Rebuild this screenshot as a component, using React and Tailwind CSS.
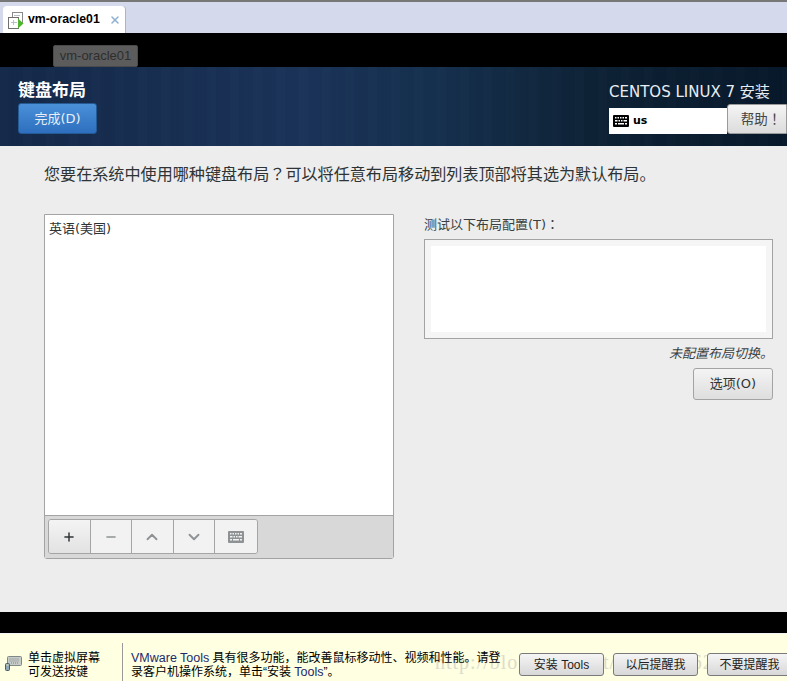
import { ChevronUp, ChevronDown, Minus, Plus, X } from "lucide-react";

const cjk = "font-['DejaVu_Sans','Noto_Sans_CJK_JP',sans-serif]";
const xpFont = "font-['Liberation_Sans','Noto_Sans_CJK_SC',sans-serif]";

function KeyboardIcon({ className }) {
  return (
    <svg viewBox="0 0 16 12" className={className} fill="currentColor">
      <path
        fillRule="evenodd"
        d="M1 0h14a1 1 0 0 1 1 1v10a1 1 0 0 1-1 1H1a1 1 0 0 1-1-1V1a1 1 0 0 1 1-1zM2 2v1.500h1.500V2zm2.500 0v1.500H6V2zM7 2v1.500h1.500V2zm2.500 0v1.500H11V2zM12 2v1.500h2V2zM2 5v1.500h2.500V5zm3.500 0v1.500H7V5zM8 5v1.500h1.500V5zm2.500 0v1.500H14V5zM2 8v1.500h2V8zm3 0v1.500h6V8zm7 0v1.500h2V8z"
      />
    </svg>
  );
}

function VmIcon() {
  return (
    <svg viewBox="0 0 18 18" className="h-[18px] w-[18px] shrink-0">
      <rect x="4.500" y="1.500" width="10" height="11" fill="none" stroke="#8a8a8a" />
      <rect x="0.500" y="6.500" width="10" height="11" fill="#fff" stroke="#707070" />
      <path d="M3 11.500h6M5.500 9v5M6 4.500h6" stroke="#b5c0c8" fill="none" />
      <path d="M10 7.500l5.500 5-5.500 5z" fill="#4fb52f" />
    </svg>
  );
}

function ToolButton({ children, active }) {
  return (
    <div
      className={`flex h-[33px] w-[41.600px] items-center justify-center border-r border-[#a5a5a5] last:border-r-0 ${
        active ? "bg-gradient-to-b from-[#f4f4f4] to-[#e2e2e2] text-[#2e3436]" : "bg-[#f2f2f2] text-[#8f9294]"
      }`}
    >
      {children}
    </div>
  );
}

function XpButton({ children, className }) {
  return (
    <div
      className={`flex h-[23px] items-center justify-center rounded-[3px] border border-[#7a7a7a] bg-gradient-to-b from-[#f5f5f5] to-[#d8d8d8] text-[12px] text-[#222] ${className}`}
    >
      {children}
    </div>
  );
}

export default function App() {
  return (
    <div className={`relative flex h-[681px] w-[787px] flex-col overflow-hidden ${cjk}`}>
      {/* vmware tab strip */}
      <div className="h-[33px] shrink-0 border-t-2 border-[#777] bg-[#d4daec] pl-[3px] pt-1">
        <div className={`flex h-[27px] w-[123px] items-center rounded-t-[4px] border-r border-[#a9b4cc] bg-white pl-[5px] ${xpFont}`}>
          <VmIcon />
          <span className="ml-[2px] text-[12.300px] font-bold text-black">vm-oracle01</span>
          <X size={12} strokeWidth={3} className="ml-[9px] text-[#8fb0d0]" />
        </div>
      </div>

      {/* black strip with tooltip */}
      <div className="h-[34px] shrink-0 bg-black pl-[53px] pt-3">
        <div className={`flex h-[22px] w-[85px] items-center justify-center rounded-[2px] border border-[#4a4a4a] bg-[#5c5c5c] text-[13px] text-[#2e2e2e] ${xpFont}`}>
          vm-oracle01
        </div>
      </div>

      {/* anaconda header */}
      <div className="flex h-[79px] shrink-0 justify-between bg-[repeating-linear-gradient(90deg,rgba(255,255,255,0.006)_0px,rgba(255,255,255,0.006)_9px,rgba(0,0,0,0.012)_9px,rgba(0,0,0,0.012)_23px),linear-gradient(90deg,#14294a_0%,#1a3358_38%,#15304f_55%,#0e2236_75%,#07182a_100%)]">
        <div className="pl-[18px] pt-3">
          <div className="text-[17px] font-bold leading-[22px] text-white">键盘布局</div>
          <div className="mt-[2px] flex h-[31px] w-[79px] items-center justify-center rounded-[3px] border border-[#255a94] bg-gradient-to-b from-[#4a90d9] to-[#2d6fbe] text-[13px] text-[#e8eef5]">
            完成(D)
          </div>
        </div>
        <div className="flex w-[178px] flex-col items-start pt-[15px]">
          <div className="whitespace-nowrap text-[15px] leading-5 text-[#e8edf2]">CENTOS LINUX 7 安装</div>
          <div className="mt-[6px] flex items-start">
            <div className="flex h-[26px] w-[118px] items-center bg-white pl-[4px]">
              <KeyboardIcon className="h-3 w-4 text-black" />
              <span className="ml-[4px] text-[11px] font-bold text-black">us</span>
            </div>
            <div className="-mt-[4px] flex h-[30px] w-[60px] items-center justify-center rounded-l-[3px] border border-[#9a9a9a] bg-gradient-to-b from-[#f4f4f4] to-[#dcdcdc] pl-2 text-[13.500px] text-[#444]">
              帮助！
            </div>
          </div>
        </div>
      </div>

      {/* spoke body */}
      <div className="flex h-[466px] shrink-0 flex-col bg-[#ededed] pl-11 pr-[14px] pt-[19px]">
        <p className="whitespace-nowrap text-[16.100px] leading-5 text-[#2e3436]">
          您要在系统中使用哪种键盘布局？可以将任意布局移动到列表顶部将其选为默认布局。
        </p>
        <div className="mt-[29px] flex gap-[30px]">
          <div className="flex h-[345px] w-[350px] flex-col rounded-b-[3px] border border-[#a3a3a3]">
            <div className="flex-1 bg-white pl-1 pt-[5px] text-[13px] leading-[18px] text-[#2e3436]">英语(美国)</div>
            <div className="flex h-[43px] items-start border-t border-[#a3a3a3] bg-[#d8d8d8] pl-[3px] pt-[3px]">
              <div className="flex overflow-hidden rounded-[3px] border border-[#a5a5a5]">
                <ToolButton active>
                  <Plus size={14} strokeWidth={2.500} />
                </ToolButton>
                <ToolButton>
                  <Minus size={14} strokeWidth={2.500} />
                </ToolButton>
                <ToolButton>
                  <ChevronUp size={18} strokeWidth={2.500} />
                </ToolButton>
                <ToolButton>
                  <ChevronDown size={18} strokeWidth={2.500} />
                </ToolButton>
                <ToolButton>
                  <KeyboardIcon className="h-3 w-4" />
                </ToolButton>
              </div>
            </div>
          </div>
          <div className="flex w-[349px] flex-col">
            <div className="pt-px text-[13px] leading-5 text-[#3a3f41]">测试以下布局配置(T)：</div>
            <div className="mt-[4px] h-[100px] border border-[#a3a3a3] bg-[#f5f5f5] p-[6px]">
              <div className="h-full bg-white" />
            </div>
            <div className="mt-[5px] whitespace-nowrap text-right text-[13px] italic leading-5 text-[#3a3f41]">未配置布局切换。</div>
            <div className="mt-[4px] flex justify-end">
              <div className="flex h-8 w-20 items-center justify-center rounded-[3px] border border-[#a3a3a3] bg-gradient-to-b from-[#f4f4f4] to-[#dedede] text-[13px] text-[#2e3436]">
                选项(O)
              </div>
            </div>
          </div>
        </div>
      </div>

      <div className="h-[21px] shrink-0 bg-black" />

      {/* vmware hint bar */}
      <div className={`relative flex min-h-0 flex-1 items-start border-t border-[#f4f4f4] bg-[#ffffe1] text-[12px] leading-[14px] text-black ${xpFont}`}>
        <div className="pointer-events-none absolute left-[435px] top-[14px] whitespace-nowrap font-['Liberation_Serif',serif] text-[20px] leading-7 tracking-[1px] text-[#dcdccc]">
          http://blog.csdn.net/a19207862319
        </div>
        <svg viewBox="0 0 17 15" className="ml-[5px] mt-[22px] h-[15px] w-[17px] shrink-0">
          <rect x="2.500" y="0.500" width="14" height="9" rx="1" fill="#c8ccc8" stroke="#808888" />
          <path d="M4.500 3h10M4.500 5h10M6 7h7" stroke="#7a8488" strokeDasharray="1 1" />
          <rect x="0.500" y="7.500" width="4" height="7" rx="1" fill="#8fa8b8" stroke="#4a5a68" />
          <path d="M1.500 9h2" stroke="#e8e4a0" />
        </svg>
        <div className="ml-[6px] mt-[17px] w-[94px] shrink-0">单击虚拟屏幕<br />可发送按键</div>
        <div className="mt-[9px] h-[38px] w-px shrink-0 bg-[#999]" />
        <div className="relative ml-2 mt-[17px] w-[372px] shrink-0 whitespace-nowrap">
          <span className="text-[12.500px] text-[#1c2a6e]">VMware Tools</span> 具有很多功能，能改善鼠标移动性、视频和性能。请登<br />录客户机操作系统，单击“安装 <span className="text-[12.500px] text-[#1c2a6e]">Tools</span>”。
        </div>
        <div className="relative ml-[16px] flex shrink-0 gap-[9px] pt-[19px]">
          <XpButton className="w-[85px]">安装 Tools</XpButton>
          <XpButton className="w-[85px]">以后提醒我</XpButton>
          <XpButton className="w-[85px]">不要提醒我</XpButton>
        </div>
      </div>
    </div>
  );
}
